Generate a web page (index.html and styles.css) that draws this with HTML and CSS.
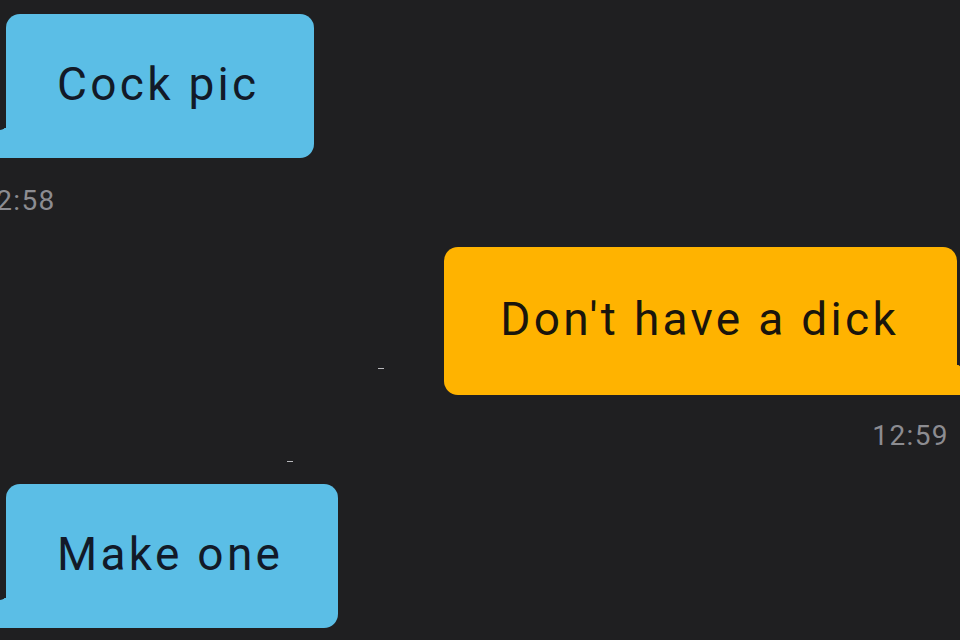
FILE: index.html
```html
<!doctype html>
<html lang="en">
 <head>
  <meta charset="UTF-8">
  <title>Chat</title>
  <link rel="stylesheet" href="styles.css">
 </head>
 <body>

	<div id="chat">
		<!-- 받은 메시지 -->
		<div class="msg them first">
			<div class="bubble blue">Cock pic</div>
			<div class="time">12:58</div>
		</div>

		<!-- 보낸 메시지 -->
		<div class="msg me">
			<div class="bubble orange">Don't have a dick</div>
			<div class="time">12:59</div>
		</div>

		<div class="msg them">
			<div class="bubble blue">Make one</div>
		</div>

		<span class="speck s1"></span>
		<span class="speck s2"></span>
	</div>

 </body>
</html>
```

FILE: styles.css
```css
/* 전체 화면 */
html, body {
margin: 0;
height: 100%;
}

body {
background: #1f1f21;
font-family: Roboto, "Liberation Sans", sans-serif;
overflow: hidden;
}

#chat {
position: relative;
height: 640px;
display: flex;
flex-direction: column;
}

/* 메시지 한 줄 */
.msg {
display: flex;
flex-direction: column;
}

.msg.them {
align-items: flex-start;
padding-left: 6px;
}

.msg.me {
align-items: flex-end;
padding-right: 3px;
}

.first {
margin-top: 14px;
}

.msg.me {
margin-top: 29px;
}

.msg.me + .msg.them {
margin-top: 31px;
}

/* 말풍선 */
.bubble {
position: relative;
height: 144px;
box-sizing: border-box;
display: flex;
align-items: center;
font-size: 46px;
letter-spacing: 3.3px;
border-radius: 14px;
padding-bottom: 4px;
}

.blue {
background: #5bbee6;
color: #121a28;
padding-left: 51px;
padding-right: 55px;
border-bottom-left-radius: 0;
}

.orange {
background: #ffb300;
color: #1a150c;
height: 148px;
padding-left: 56px;
padding-right: 58px;
border-bottom-right-radius: 0;
}

/* 꼬리 */
.blue::before,
.orange::before {
content: "";
position: absolute;
bottom: 0;
width: 8px;
height: 30px;
}

.blue::before {
left: -8px;
background: #5bbee6;
}

.orange::before {
right: -8px;
background: #ffb300;
}

.blue::after,
.orange::after {
content: "";
position: absolute;
bottom: 28px;
width: 8px;
height: 12px;
background: #1f1f21;
}

.blue::after {
left: -8px;
border-bottom-right-radius: 6px;
}

.orange::after {
right: -8px;
border-bottom-left-radius: 6px;
}

/* 시간 */
.time {
font-size: 28px;
letter-spacing: 1.4px;
color: #8c8c91;
line-height: 34px;
}

.them .time {
margin-top: 26px;
margin-left: -27px;
}

.me .time {
margin-top: 24px;
margin-right: 8px;
}

/* 작은 점 */
.speck {
position: absolute;
height: 1px;
width: 6px;
background: #b9b9bd;
}

.s1 {
left: 378px;
top: 368px;
}

.s2 {
left: 287px;
top: 461px;
}
```
